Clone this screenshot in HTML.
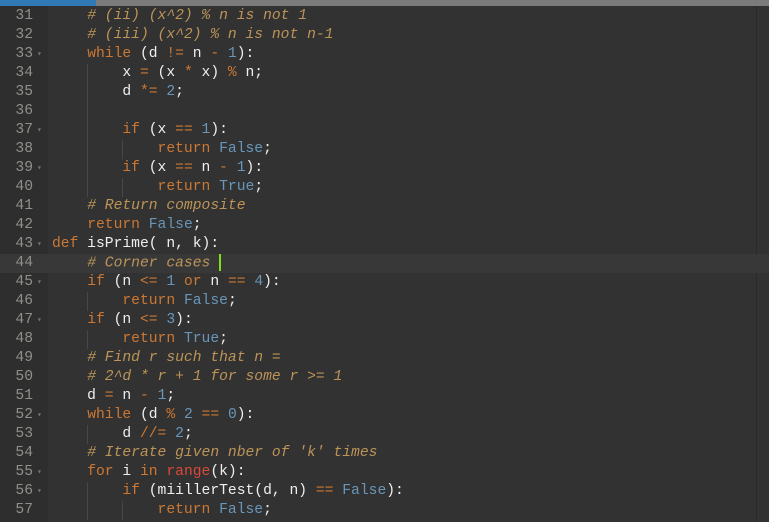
<!DOCTYPE html><html><head><style>
body{margin:0;width:769px;height:522px;overflow:hidden;background:#323232;font-family:"Liberation Mono",monospace;font-size:14.67px}
#bar{position:absolute;top:0;left:0;width:769px;height:6px;background:#7b7b7b}
#bar div{width:96px;height:6px;background:#3079b5}
#gut{position:absolute;top:6px;left:0;width:48px;height:516px;background:#2e2e2e}
#pm{position:absolute;top:6px;left:756px;width:1px;height:516px;background:#2a2a2a}
.l{position:absolute;left:0;width:769px;height:19px;line-height:19px;white-space:pre;color:#eeeeee}
.n{position:absolute;left:0;width:33px;text-align:right;color:#8f908a}
.f{position:absolute;left:37px;top:0;color:#777;font-size:8px}
.c{position:absolute;left:52px}
.k{color:#cc7833}.m{color:#bc9458;font-style:italic}.d{color:#6896ba}.r{color:#da4939}
.act{background:#383838}
.g{position:absolute;top:0;width:1px;height:19px;background:#474747}
.g1{left:87px}.g2{left:122px}
</style></head><body>
<div id="bar"><div></div></div><div id="gut"></div><div id="pm"></div>
<div class="l" style="top:7px"><span class="n">31</span><span class="c">    <span class="m"># (ii) (x^2) % n is not 1</span></span></div>
<div class="l" style="top:26px"><span class="n">32</span><span class="c">    <span class="m"># (iii) (x^2) % n is not n-1</span></span></div>
<div class="l" style="top:45px"><span class="n">33</span><span class="f">▾</span><span class="c">    <span class="k">while</span> (d <span class="k">!=</span> n <span class="k">-</span> <span class="d">1</span>):</span></div>
<div class="l" style="top:64px"><span class="n">34</span><i class="g g1"></i><span class="c">        x <span class="k">=</span> (x <span class="k">*</span> x) <span class="k">%</span> n;</span></div>
<div class="l" style="top:83px"><span class="n">35</span><i class="g g1"></i><span class="c">        d <span class="k">*=</span> <span class="d">2</span>;</span></div>
<div class="l" style="top:102px"><span class="n">36</span><i class="g g1"></i></div>
<div class="l" style="top:121px"><span class="n">37</span><span class="f">▾</span><i class="g g1"></i><span class="c">        <span class="k">if</span> (x <span class="k">==</span> <span class="d">1</span>):</span></div>
<div class="l" style="top:140px"><span class="n">38</span><i class="g g1"></i><i class="g g2"></i><span class="c">            <span class="k">return</span> <span class="d">False</span>;</span></div>
<div class="l" style="top:159px"><span class="n">39</span><span class="f">▾</span><i class="g g1"></i><span class="c">        <span class="k">if</span> (x <span class="k">==</span> n <span class="k">-</span> <span class="d">1</span>):</span></div>
<div class="l" style="top:178px"><span class="n">40</span><i class="g g1"></i><i class="g g2"></i><span class="c">            <span class="k">return</span> <span class="d">True</span>;</span></div>
<div class="l" style="top:197px"><span class="n">41</span><span class="c">    <span class="m"># Return composite</span></span></div>
<div class="l" style="top:216px"><span class="n">42</span><span class="c">    <span class="k">return</span> <span class="d">False</span>;</span></div>
<div class="l" style="top:235px"><span class="n">43</span><span class="f">▾</span><span class="c"><span class="k">def</span> isPrime( n, k):</span></div>
<div class="l act" style="top:254px"><span class="n">44</span><span class="c">    <span class="m"># Corner cases </span><span style="display:inline-block;width:2px;height:17px;background:#7fe01a;vertical-align:middle"></span></span></div>
<div class="l" style="top:273px"><span class="n">45</span><span class="f">▾</span><span class="c">    <span class="k">if</span> (n <span class="k">&lt;=</span> <span class="d">1</span> <span class="k">or</span> n <span class="k">==</span> <span class="d">4</span>):</span></div>
<div class="l" style="top:292px"><span class="n">46</span><i class="g g1"></i><span class="c">        <span class="k">return</span> <span class="d">False</span>;</span></div>
<div class="l" style="top:311px"><span class="n">47</span><span class="f">▾</span><span class="c">    <span class="k">if</span> (n <span class="k">&lt;=</span> <span class="d">3</span>):</span></div>
<div class="l" style="top:330px"><span class="n">48</span><i class="g g1"></i><span class="c">        <span class="k">return</span> <span class="d">True</span>;</span></div>
<div class="l" style="top:349px"><span class="n">49</span><span class="c">    <span class="m"># Find r such that n =</span></span></div>
<div class="l" style="top:368px"><span class="n">50</span><span class="c">    <span class="m"># 2^d * r + 1 for some r &gt;= 1</span></span></div>
<div class="l" style="top:387px"><span class="n">51</span><span class="c">    d <span class="k">=</span> n <span class="k">-</span> <span class="d">1</span>;</span></div>
<div class="l" style="top:406px"><span class="n">52</span><span class="f">▾</span><span class="c">    <span class="k">while</span> (d <span class="k">%</span> <span class="d">2</span> <span class="k">==</span> <span class="d">0</span>):</span></div>
<div class="l" style="top:425px"><span class="n">53</span><i class="g g1"></i><span class="c">        d <span class="k">//=</span> <span class="d">2</span>;</span></div>
<div class="l" style="top:444px"><span class="n">54</span><span class="c">    <span class="m"># Iterate given nber of 'k' times</span></span></div>
<div class="l" style="top:463px"><span class="n">55</span><span class="f">▾</span><span class="c">    <span class="k">for</span> i <span class="k">in</span> <span class="r">range</span>(k):</span></div>
<div class="l" style="top:482px"><span class="n">56</span><span class="f">▾</span><i class="g g1"></i><span class="c">        <span class="k">if</span> (miillerTest(d, n) <span class="k">==</span> <span class="d">False</span>):</span></div>
<div class="l" style="top:501px"><span class="n">57</span><i class="g g1"></i><i class="g g2"></i><span class="c">            <span class="k">return</span> <span class="d">False</span>;</span></div>
</body></html>
